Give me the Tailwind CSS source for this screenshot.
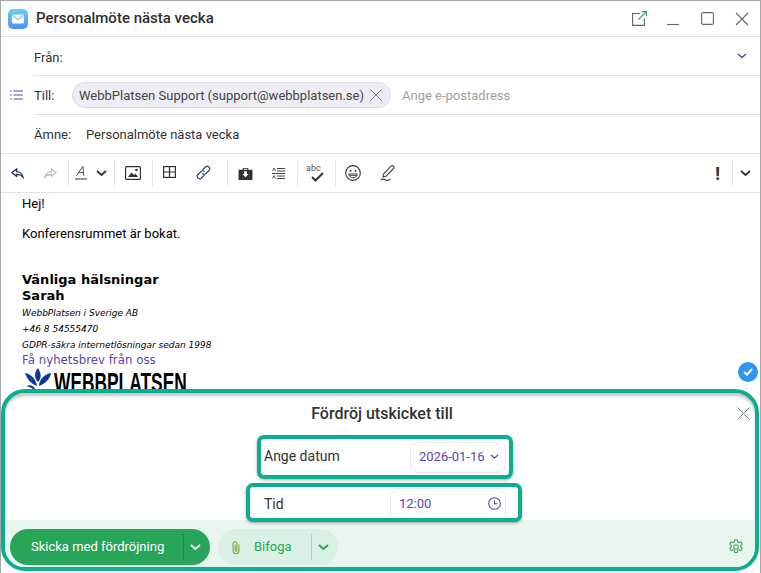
<!DOCTYPE html>
<html lang="sv">
<head>
<meta charset="UTF-8">
<title>Personalmöte nästa vecka</title>
<script src="https://cdn.jsdelivr.net/npm/@tailwindcss/browser@4"></script>
</head>
<body class="bg-white font-['Roboto',sans-serif] text-[#333]">
<div class="relative w-[761px] h-[573px] overflow-hidden flex flex-col border-t border-l border-r border-[#a8a8a8] bg-white">

  <!-- title bar -->
  <div class="h-[36px] shrink-0 flex items-center pl-[7px] pr-[11px] border-b border-[#e2e2e2]">
    <svg width="20" height="20" viewBox="0 0 20 20" class="shrink-0">
      <defs><linearGradient id="mailbg" x1="0" y1="0" x2="0" y2="1"><stop offset="0" stop-color="#5fd0fb"/><stop offset="1" stop-color="#4d8ff8"/></linearGradient></defs>
      <rect width="20" height="20" rx="5" fill="url(#mailbg)"/>
      <rect x="4" y="5.5" width="12" height="9" rx="1.2" fill="#fff"/>
      <path d="M4.5 6.5 10 10.5l5.500-4" fill="none" stroke="#7cc3fa" stroke-width="1.1"/>
    </svg>
    <div class="ml-[8px] text-[15px] font-medium text-[#2f2f2f] leading-none">Personalmöte nästa vecka</div>
    <div class="ml-auto flex items-center">
      <svg width="15" height="15" viewBox="0 0 15 15" fill="none" stroke="#2a9d8f" stroke-width="1.100" class="mr-[20px]"><path d="M8 2.500H.6v11.900h11.800V7.500" stroke="#666"/><path d="M6.500 8.500 14.400.6M9.800.6h4.600v4.600"/></svg>
      <svg width="12" height="14" viewBox="0 0 12 14" fill="none" stroke="#666" stroke-width="1.100" class="mr-[22px]"><path d="M0 12.500h12"/></svg>
      <svg width="13" height="13" viewBox="0 0 13 13" fill="none" stroke="#666" stroke-width="1.100" class="mr-[21px]"><rect x=".6" y=".6" width="11.800" height="11.800" rx="1.500"/></svg>
      <svg width="14" height="14" viewBox="0 0 14 14" fill="none" stroke="#666" stroke-width="1.100"><path d="M1 1l12 12M13 1 1 13"/></svg>
    </div>
  </div>

  <!-- Från -->
  <div class="h-[39px] shrink-0 ml-[33px] flex items-center border-b border-[#e2e2e2] text-[13px] pr-[13px]">
    <span class="mt-[3px]">Från:</span>
    <svg width="10" height="6" viewBox="0 0 10 6" fill="none" stroke="#5a45b0" stroke-width="1.500" class="ml-auto"><path d="M1 1l4 3.500L9 1"/></svg>
  </div>

  <!-- Till -->
  <div class="relative h-[39px] shrink-0 ml-[33px] flex items-center border-b border-[#e2e2e2] text-[13px]">
    <svg width="13" height="10" viewBox="0 0 13 10" fill="none" stroke="#5a45b0" stroke-width="1" class="absolute left-[-24px] top-[14px]"><path d="M3.500 1H13M3.500 5H13M3.500 9H13M0 1h1.500M0 5h1.500M0 9h1.500"/></svg>
    <span class="w-[38px] mt-[2px]">Till:</span>
    <div class="h-[26px] flex items-center pl-[6px] pr-[8px] bg-[#eeedf5] border border-[#dcdae8] rounded-full whitespace-nowrap text-[#444]">
      <span class="mt-[2px]">WebbPlatsen Support (support@webbplatsen.se)</span>
      <svg width="12" height="12" viewBox="0 0 12 12" fill="none" stroke="#777" stroke-width="1" class="ml-[6px]"><path d="M.5.5l11 11M11.500.5l-11 11"/></svg>
    </div>
    <span class="ml-[11px] mt-[2px] text-[#a0a0a0]">Ange e-postadress</span>
  </div>

  <!-- Ämne -->
  <div class="h-[39px] shrink-0 flex items-center border-b border-[#e2e2e2] text-[13px] pl-[33px]">
    <span class="w-[52px] mt-[2px]">Ämne:</span>
    <span class="mt-[2px]">Personalmöte nästa vecka</span>
  </div>

  <!-- toolbar -->
  <div class="h-[39px] shrink-0 flex items-center border-b border-[#e2e2e2] relative text-[#333]">
    <svg width="13" height="11" viewBox="0 0 14 12" fill="none" stroke="#2b3a5c" stroke-width="1.500" class="absolute left-[10px] top-[14px]"><path d="M6 1 1 5l5 4V7c3 0 5 .5 7 3-.5-3-3-6-7-6z"/></svg>
    <svg width="13" height="11" viewBox="0 0 14 12" fill="none" stroke="#b5b5b5" stroke-width="1.200" class="absolute left-[43px] top-[14px]"><path d="M8 1l5 4-5 4V7c-3 0-5 .5-7 3 .5-3 3-6 7-6z"/></svg>
    <div class="absolute left-[67px] top-[6px] w-px h-[26px] bg-[#e4e4e4]"></div>
    <svg width="12" height="16" viewBox="0 0 13 16" fill="none" stroke="#444" stroke-width="1" class="absolute left-[74px] top-[11px]"><path d="M1.500 11 8.500 .8l1 10.200M4 7.500h5.300"/><path d="M0 14.500h13" stroke-width="1.200" stroke="#36476b"/></svg>
    <svg width="11" height="7" viewBox="0 0 11 7" fill="none" stroke="#333" stroke-width="1.800" class="absolute left-[95px] top-[16px]"><path d="M1 1l4.500 4L10 1"/></svg>
    <div class="absolute left-[113px] top-[6px] w-px h-[26px] bg-[#e4e4e4]"></div>
    <svg width="16" height="14" viewBox="0 0 16 14" class="absolute left-[124px] top-[12px]"><rect x=".6" y=".6" width="14.800" height="12.800" rx="1" fill="#fff" stroke="#333" stroke-width="1.200"/><path d="M3 11l3.500-4.500L9 9l1.500-1.500L13 11z" fill="#333"/><circle cx="11.500" cy="4" r="1.300" fill="#333"/></svg>
    <div class="absolute left-[151px] top-[6px] w-px h-[26px] bg-[#e4e4e4]"></div>
    <svg width="13" height="12" viewBox="0 0 13 12" fill="none" stroke="#333" stroke-width="1.200" class="absolute left-[162px] top-[12px]"><rect x=".6" y=".6" width="11.800" height="10.800"/><path d="M.6 6h11.800M6.500.6v10.800"/></svg>
    <svg width="15" height="15" viewBox="0 0 15 15" fill="none" stroke="#36476b" stroke-width="1.200" class="absolute left-[195px] top-[11px]"><path d="M6.500 5 9.500 2a2.400 2.400 0 0 1 3.500 3.500L10 8.500a2.400 2.400 0 0 1-3.500 0"/><path d="M8.500 10 5.500 13A2.400 2.400 0 0 1 2 9.500L5 6.500a2.400 2.400 0 0 1 3.500 0"/></svg>
    <div class="absolute left-[226px] top-[6px] w-px h-[26px] bg-[#e4e4e4]"></div>
    <svg width="15" height="13" viewBox="0 0 15 14" class="absolute left-[237px] top-[13px]"><path d="M0 3h4.500V1h6v2H15v11H0zM5.500 3h4V2h-4z" fill="#333" fill-rule="evenodd"/><path d="M6 4.500h3V7.500h1.800L7.500 11 4.200 7.500H6z" fill="#fff"/></svg>
    <svg width="13" height="13" viewBox="0 0 13 13" class="absolute left-[271px] top-[13px]" fill="none" stroke="#444" stroke-width="1"><path d="M5 1.500h8M5 4h8M0 6.500h13M5 9h8M5 11.500h8" /><path d="M.5 4 2 1l1.500 3M.5 11.500 2 8.500l1.500 3" stroke-width=".8"/></svg>
    <div class="absolute left-[296px] top-[6px] w-px h-[26px] bg-[#e4e4e4]"></div>
    <span class="absolute left-[305px] top-[10px] text-[9px] leading-none text-[#555]">abc</span>
    <svg width="13" height="10" viewBox="0 0 13 10" fill="none" stroke="#333" stroke-width="2" class="absolute left-[310px] top-[18px]"><path d="M1 5l3.500 3.500L12 1"/></svg>
    <div class="absolute left-[334px] top-[6px] w-px h-[26px] bg-[#e4e4e4]"></div>
    <svg width="16" height="16" viewBox="0 0 17 17" fill="none" stroke="#333" stroke-width="1.200" class="absolute left-[344px] top-[11px]"><circle cx="8.500" cy="8.500" r="7.800"/><circle cx="5.800" cy="6.300" r="1" fill="#333" stroke="none"/><circle cx="11.200" cy="6.300" r="1" fill="#333" stroke="none"/><path d="M4 9.500h9c0 2.500-2 4-4.500 4S4 12 4 9.500zM4.500 11h8" stroke-width="1"/></svg>
    <svg width="16" height="17" viewBox="0 0 16 17" fill="none" stroke="#444" stroke-width="1.100" class="absolute left-[379px] top-[11px]"><path d="M3 12 3.500 9 11 1.200a1.400 1.400 0 0 1 2.500 2.300L6 11.200z"/><path d="M.5 15c2-1.500 3.500-1 5 0s3 .5 5-1" stroke="#36476b"/></svg>
    <span class="absolute left-[714px] top-[8px] text-[19px] font-bold leading-[24px] text-[#333]">!</span>
    <div class="absolute left-[731px] top-[6px] w-px h-[26px] bg-[#e4e4e4]"></div>
    <svg width="11" height="7" viewBox="0 0 11 7" fill="none" stroke="#333" stroke-width="1.800" class="absolute left-[739px] top-[16px]"><path d="M1 1l4.500 4L10 1"/></svg>
  </div>

  <!-- message body -->
  <div class="relative flex-1 min-h-0 overflow-hidden pl-[21px] pt-[2px] text-black">
    <p class="text-[13px] leading-[17px]">Hej!</p>
    <p class="text-[13px] leading-[17px] mt-[13px]">Konferensrummet är bokat.</p>
    <p class="mt-[30px] font-['DejaVu_Sans',sans-serif] font-bold text-[13px] leading-[16px]">Vänliga hälsningar<br>Sarah</p>
    <div class="mt-[1px] font-['DejaVu_Sans',sans-serif] italic text-[9px] leading-[16px]">
      <p>WebbPlatsen i Sverige AB</p>
      <p>+46 8 54555470</p>
      <p>GDPR-säkra internetlösningar sedan 1998</p>
    </div>
    <p class="font-['DejaVu_Sans',sans-serif] text-[11.800px] leading-[15px] text-[#5b45b0]">Få nyhetsbrev från oss</p>
    <div class="flex items-start ml-[2px] text-black">
      <svg width="28" height="24" viewBox="0 0 28 24" class="shrink-0" fill="#0d3a94"><path d="M14 14C10 10 10 5 14 0c3 5 4 10 0 14z"/><path d="M13 18C7 16 3 11 1 5c6 1 11 6 12 13z"/><path d="M15 18c0-7 6-12 12-13-1 6-6 11-12 13z"/><path d="M12 24C9 20 6 19 2 18c5-2 9 0 10 6z"/></svg>
      <span class="ml-[2px] mt-[2px] origin-left scale-x-[.62] font-['Liberation_Sans',sans-serif] font-bold text-[28px] leading-[26px] whitespace-nowrap">WEBBPLATSEN</span>
    </div>
    <div class="absolute right-[2px] top-[169px] w-[20px] h-[20px] rounded-full bg-[#2f96f3] flex items-center justify-center">
      <svg width="10" height="8" viewBox="0 0 10 8" fill="none" stroke="#fff" stroke-width="2"><path d="M1 4l3 2.700L9 1"/></svg>
    </div>
  </div>

  <!-- delayed send panel -->
  <div class="relative h-[182px] mb-[2px] mr-[1px] shrink-0 rounded-[24px] border-[4px] border-[#0bae8e] overflow-hidden flex flex-col bg-white shadow-[inset_0_3px_3px_rgba(0,0,0,0.22)]">
    <div class="text-center text-[16px] font-medium text-[#333] leading-[18px] mt-[12px] pl-[4px]">Fördröj utskicket till</div>
    <svg width="13" height="13" viewBox="0 0 14 14" fill="none" stroke="#707a88" stroke-width="1" class="absolute right-[5px] top-[14px]"><path d="M.5.5l13 13M13.500.5l-13 13"/></svg>

    <div class="ml-[252px] mt-[12px] w-[256px] h-[44px] shrink-0 border-[4px] border-[#0bae8e] rounded-[7px] flex items-center pl-[3px] pr-[3px] shadow-[0_1px_3px_rgba(0,0,0,0.35)] text-[14px] text-[#333]">
      <span class="mb-[2px]">Ange datum</span>
      <div class="ml-auto w-[96px] h-[31px] border border-[#e8e8ee] rounded-[9px] flex items-center pl-[8px] text-[13px] text-[#5b45b0]">
        <span>2026-01-16</span>
        <svg width="9" height="6" viewBox="0 0 9 6" fill="none" stroke="#5b45b0" stroke-width="1.300" class="ml-[5px]"><path d="M1 1l3.500 3L8 1"/></svg>
      </div>
    </div>

    <div class="ml-[241px] mt-[4px] -mb-[2px] w-[276px] h-[39px] shrink-0 border-[4px] border-[#0bae8e] rounded-[7px] flex pl-[14px] pr-[12px] shadow-[0_1px_3px_rgba(0,0,0,0.35)] text-[14px] text-[#333] relative z-10 bg-white">
      <span class="self-center mt-[3px]">Tid</span>
      <div class="ml-auto mt-[1px] w-[116px] border-l border-r border-t border-[#e8e8ee] rounded-t-[9px] flex items-center pl-[8px] pr-[4px] text-[13px] text-[#5b45b0]">
        <span>12:00</span>
        <svg width="13" height="13" viewBox="0 0 13 13" fill="none" stroke="#5b45b0" stroke-width="1.100" class="ml-auto"><circle cx="6.500" cy="6.500" r="5.800"/><path d="M6.500 3.200v3.500h3"/></svg>
      </div>
    </div>

    <div class="flex-1 bg-[#e8f6ef] flex items-start pl-[5px] pr-[11px] pt-[9px]">
      <div class="h-[36px] w-[200px] rounded-full bg-[#27a558] flex items-center text-white text-[13px]">
        <span class="w-[174px] leading-[26px] pl-[21px] whitespace-nowrap border-r border-[#1d8a48]">Skicka med fördröjning</span>
        <svg width="11" height="7" viewBox="0 0 11 7" fill="none" stroke="#fff" stroke-width="1.800" class="ml-[6px]"><path d="M1 1l4.500 4L10 1"/></svg>
      </div>
      <div class="ml-[8px] h-[36px] w-[120px] rounded-full bg-[#d9f1e4] flex items-center text-[#27a558] text-[13px]">
        <svg width="10" height="15" viewBox="0 0 12 17" fill="none" stroke="#7bb13c" stroke-width="1.400" class="ml-[13px]"><path d="M9.500 5v7.500a3.500 3.500 0 0 1-7 0V4a2.300 2.300 0 0 1 4.600 0v8a1 1 0 0 1-2 0V5"/></svg>
        <span class="ml-[13px]">Bifoga</span>
        <div class="ml-[19px] w-px h-[26px] bg-[#a9d8bd]"></div>
        <svg width="11" height="7" viewBox="0 0 11 7" fill="none" stroke="#27a558" stroke-width="1.800" class="ml-[6px]"><path d="M1 1l4.500 4L10 1"/></svg>
      </div>
      <svg width="16" height="16" viewBox="0 0 16 16" fill="none" stroke="#3fae5a" stroke-width="1.100" class="ml-auto mt-[10px]"><path d="M6.700 1h2.600l.4 2 1.300.7 1.900-.8 1.300 2.300-1.500 1.300v1.500l1.500 1.300-1.300 2.300-1.900-.8-1.300.7-.4 2H6.700l-.4-2-1.300-.7-1.900.8-1.300-2.300 1.500-1.300V6.500L1.800 5.200l1.300-2.300 1.900.8 1.300-.7z"/><circle cx="8" cy="8" r="2.300"/></svg>
    </div>
  </div>
</div>
</body>
</html>
